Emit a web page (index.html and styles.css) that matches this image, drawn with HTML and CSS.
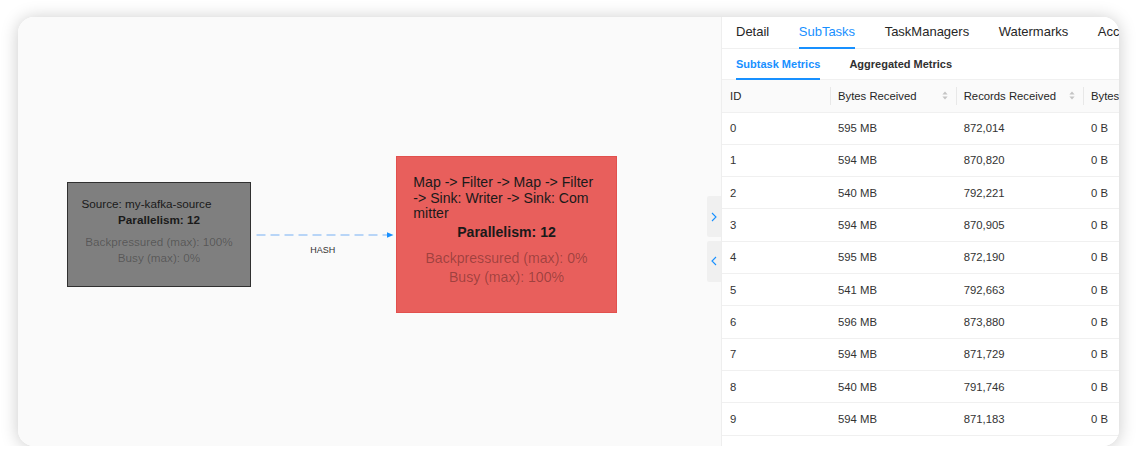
FILE: index.html
```html
<!DOCTYPE html>
<html lang="en">
<head>
<meta charset="utf-8">
<title>Job Graph - SubTasks</title>
<link rel="stylesheet" href="styles.css">
</head>
<body>
<div class="window">
  <section class="graph">
    <svg class="edge" width="142" height="34" viewBox="0 0 142 34">
      <line x1="0.5" y1="10" x2="132" y2="10" stroke="#a3c9f6" stroke-width="1.5" stroke-dasharray="9 5"/>
      <path d="M131 7.3 L137.5 10 L131 12.7 Z" fill="#1890ff"/>
      <text class="edge-label" x="66.7" y="27.6" text-anchor="middle">HASH</text>
    </svg>
    <div class="node node-source">
      <div class="node-title">Source: my-kafka-source</div>
      <div class="node-par">Parallelism: 12</div>
      <div class="node-metric node-metric-first">Backpressured (max): 100%</div>
      <div class="node-metric">Busy (max): 0%</div>
    </div>
    <div class="node node-sink">
      <div class="node-title">Map -&gt; Filter -&gt; Map -&gt; Filter -&gt; Sink: Writer -&gt; Sink: Committer</div>
      <div class="node-par">Parallelism: 12</div>
      <div class="node-metric node-metric-first">Backpressured (max): 0%</div>
      <div class="node-metric">Busy (max): 100%</div>
    </div>
    <div class="toggles">
      <button class="toggle" type="button" aria-label="Collapse">
        <svg width="6" height="10" viewBox="0 0 6 10"><path d="M1 1 L5 5 L1 9" fill="none" stroke="#1890ff" stroke-width="1.1"/></svg>
      </button>
      <button class="toggle" type="button" aria-label="Expand">
        <svg width="6" height="10" viewBox="0 0 6 10"><path d="M5 1 L1 5 L5 9" fill="none" stroke="#1890ff" stroke-width="1.1"/></svg>
      </button>
    </div>
  </section>

  <section class="panel">
    <nav class="tabs">
      <span class="tab">Detail</span>
      <span class="tab tab-active">SubTasks</span>
      <span class="tab">TaskManagers</span>
      <span class="tab">Watermarks</span>
      <span class="tab">Accumulators</span>
      <span class="tab">BackPressure</span>
    </nav>
    <nav class="subtabs">
      <span class="subtab subtab-active">Subtask Metrics</span>
      <span class="subtab">Aggregated Metrics</span>
    </nav>
    <div class="table">
      <div class="row row-head">
        <div class="cell">ID</div>
        <div class="cell cell-sep">Bytes Received
          <svg class="sorter" width="6" height="11" viewBox="0 0 6 11"><path d="M0.4 4.6 L3 1.6 L5.6 4.6 Z" fill="#c4c4c4"/><path d="M0.4 6.4 L3 9.4 L5.6 6.4 Z" fill="#c4c4c4"/></svg>
        </div>
        <div class="cell cell-sep">Records Received
          <svg class="sorter" width="6" height="11" viewBox="0 0 6 11"><path d="M0.4 4.6 L3 1.6 L5.6 4.6 Z" fill="#c4c4c4"/><path d="M0.4 6.4 L3 9.4 L5.6 6.4 Z" fill="#c4c4c4"/></svg>
        </div>
        <div class="cell cell-sep">Bytes Sent</div>
      </div>
      <div class="row"><div class="cell">0</div><div class="cell">595 MB</div><div class="cell">872,014</div><div class="cell">0 B</div></div>
      <div class="row"><div class="cell">1</div><div class="cell">594 MB</div><div class="cell">870,820</div><div class="cell">0 B</div></div>
      <div class="row"><div class="cell">2</div><div class="cell">540 MB</div><div class="cell">792,221</div><div class="cell">0 B</div></div>
      <div class="row"><div class="cell">3</div><div class="cell">594 MB</div><div class="cell">870,905</div><div class="cell">0 B</div></div>
      <div class="row"><div class="cell">4</div><div class="cell">595 MB</div><div class="cell">872,190</div><div class="cell">0 B</div></div>
      <div class="row"><div class="cell">5</div><div class="cell">541 MB</div><div class="cell">792,663</div><div class="cell">0 B</div></div>
      <div class="row"><div class="cell">6</div><div class="cell">596 MB</div><div class="cell">873,880</div><div class="cell">0 B</div></div>
      <div class="row"><div class="cell">7</div><div class="cell">594 MB</div><div class="cell">871,729</div><div class="cell">0 B</div></div>
      <div class="row"><div class="cell">8</div><div class="cell">540 MB</div><div class="cell">791,746</div><div class="cell">0 B</div></div>
      <div class="row"><div class="cell">9</div><div class="cell">594 MB</div><div class="cell">871,183</div><div class="cell">0 B</div></div>
    </div>
  </section>
</div>
</body>
</html>
```

FILE: styles.css
```css
html, body {
  margin: 0;
  padding: 0;
  background: #ffffff;
}

body {
  font-family: "Liberation Sans", Arial, sans-serif;
  color: #262626;
  overflow: hidden;
}

.window {
  margin: 17px 0 0 18px;
  width: 1101px;
  height: 429px;
  border-radius: 16px;
  box-shadow: 0 1px 17px rgba(0, 0, 0, 0.21);
  overflow: hidden;
  display: flex;
  background: #ffffff;
}

/* ---------- graph canvas ---------- */
.graph {
  position: relative;
  flex: none;
  width: 703px;
  background: #fafafa;
  border-right: 1px solid #eeeeee;
}

.edge {
  position: absolute;
  left: 238px;
  top: 208px;
  overflow: visible;
}

.edge-label {
  font-family: "Liberation Sans", Arial, sans-serif;
  font-size: 9px;
  fill: #333333;
}

.node {
  position: absolute;
  box-sizing: border-box;
  padding: 1.3em 1.16em 0;
  color: #1a1a1a;
  text-align: center;
}

.node-source {
  left: 49px;
  top: 165px;
  width: 184px;
  height: 105px;
  font-size: 11.7px;
  background: #7f7f7f;
  border: 1px solid #303030;
}

.node-sink {
  left: 378px;
  top: 138.7px;
  width: 221px;
  height: 157.7px;
  font-size: 14.1px;
  background: #e85f5c;
  border: 1px solid #e2504d;
}

.node-title {
  text-align: left;
  width: 13em;
  word-break: break-all;
  line-height: 1.1;
}

.node-par {
  margin-top: 0.16em;
  font-weight: bold;
  line-height: 1.2;
}

.node-metric {
  color: rgba(0, 0, 0, 0.33);
  line-height: 1.31;
}

.node-metric-first {
  margin-top: 0.62em;
}

.toggles {
  position: absolute;
  right: 0;
  top: 179px;
  display: flex;
  flex-direction: column;
  gap: 3.5px;
}

.toggle {
  width: 14px;
  height: 41px;
  padding: 0;
  margin: 0;
  border: none;
  border-radius: 2px 0 0 2px;
  background: #f0f0f0;
  display: flex;
  align-items: center;
  justify-content: center;
}

/* ---------- right panel ---------- */
.panel {
  flex: 1;
  min-width: 0;
  overflow: hidden;
  background: #ffffff;
}

.tabs {
  display: flex;
  gap: 29.5px;
  height: 32px;
  padding-left: 14px;
  box-sizing: border-box;
  border-bottom: 1px solid #f0f0f0;
}

.tab {
  position: relative;
  flex: none;
  display: flex;
  align-items: center;
  padding-bottom: 3px;
  box-sizing: border-box;
  font-size: 13px;
  color: #262626;
  white-space: nowrap;
}

.tab-active {
  color: #1890ff;
}

.tab-active::after {
  content: "";
  position: absolute;
  left: 0;
  right: 0;
  bottom: -1px;
  height: 2px;
  background: #1890ff;
}

.subtabs {
  display: flex;
  gap: 29px;
  height: 31px;
  padding-left: 14px;
  box-sizing: border-box;
  border-bottom: 1px solid #f0f0f0;
}

.subtab {
  position: relative;
  flex: none;
  display: flex;
  align-items: center;
  font-size: 11px;
  font-weight: bold;
  color: #303030;
  white-space: nowrap;
}

.subtab-active {
  color: #1890ff;
}

.subtab-active::after {
  content: "";
  position: absolute;
  left: 0;
  right: 0;
  bottom: -1px;
  height: 2px;
  background: #1890ff;
}

.table {
  width: 561px;
  font-size: 11.3px;
  color: #333333;
}

.row {
  display: grid;
  grid-template-columns: 108px 125.7px 127.3px 200px;
  height: 32.33px;
  box-sizing: border-box;
  border-bottom: 1px solid #f0f0f0;
}

.row-head {
  height: 32.5px;
  background: #fafafa;
  color: #262626;
}

.cell {
  position: relative;
  display: flex;
  align-items: center;
  justify-content: space-between;
  padding: 0 8px;
  white-space: nowrap;
  color: #333333;
}

.row-head .cell {
  color: #262626;
}

.cell-sep::before {
  content: "";
  position: absolute;
  left: 0;
  top: 50%;
  width: 1px;
  height: 18px;
  transform: translateY(-50%);
  background: #e8e8e8;
}

.sorter {
  flex: none;
}
```
